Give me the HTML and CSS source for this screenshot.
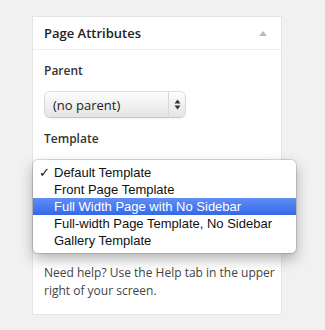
FILE: index.html
```html
<!DOCTYPE html>
<html lang="en">
  <head>
    <meta charset="UTF-8" />
    <title>Page Attributes</title>
    <link rel="stylesheet" href="styles.css">
  </head>
  <body>
    <div class="postbox">
      <header class="postbox-head">
        <h2>Page Attributes</h2>
        <span class="toggle"></span>
      </header>
      <div class="inside">
        <p class="label">Parent</p>
        <div class="select parent-select">
          <span class="select-value">(no parent)</span>
          <span class="select-arrows">
            <svg width="7" height="11" viewBox="0 0 7 11">
              <path d="M3.5 0.5 L6.5 4.5 L0.5 4.5 Z M3.5 10.5 L6.5 6.5 L0.5 6.5 Z" fill="#333"/>
            </svg>
          </span>
        </div>
        <p class="label">Template</p>
        <div class="template-wrap">
          <div class="select template-select"></div>
          <ul class="menu">
            <li class="checked">Default Template</li>
            <li>Front Page Template</li>
            <li class="active">Full Width Page with No Sidebar</li>
            <li>Full-width Page Template, No Sidebar</li>
            <li>Gallery Template</li>
          </ul>
        </div>
        <p class="help">Need help? Use the Help tab in the upper right of your screen.</p>
      </div>
    </div>
  </body>
</html>
```

FILE: styles.css
```css
* {
  box-sizing: border-box;
  margin: 0;
  padding: 0;
}
body {
  background: #f1f1f1;
  padding: 16px 0 0 32px;
  font-family: "Open Sans", sans-serif;
  color: #444;
}
.postbox {
  width: 250px;
  background: #fff;
  border: 1px solid #e5e5e5;
}
.postbox-head {
  display: flex;
  align-items: center;
  justify-content: space-between;
  height: 33px;
  padding: 0 12px 0 11px;
  border-bottom: 1px solid #eee;
}
.postbox-head h2 {
  font-size: 13px;
  font-weight: 600;
  color: #222;
}
.toggle {
  width: 0;
  height: 0;
  border-left: 4px solid transparent;
  border-right: 4px solid transparent;
  border-bottom: 5px solid #bbb;
  margin-right: 2px;
}
.inside {
  padding: 12px 3px 14px 11px;
}
.label {
  font-size: 12px;
  font-weight: 600;
  color: #333;
  line-height: 18px;
}
.select {
  display: flex;
  align-items: center;
  height: 25px;
  border-radius: 5px;
  background: linear-gradient(#fdfdfd, #e4e4e4);
  box-shadow: 0 0 0 1px rgba(0, 0, 0, 0.12), 0 1px 2px rgba(0, 0, 0, 0.15);
  font-size: 13px;
  color: #222;
}
.parent-select {
  width: 140px;
  margin: 12px 0 13px 1px;
}
.select-value {
  flex: 1;
  padding-left: 8px;
}
.select-arrows {
  display: flex;
  align-items: center;
  justify-content: center;
  width: 17px;
  height: 100%;
  border-left: 1px solid #d8d8d8;
}
.template-wrap {
  position: relative;
  margin-top: 12px;
}
.template-select {
  width: 228px;
  margin-left: 1px;
  opacity: 0.35;
}
.menu {
  position: absolute;
  top: 0;
  left: -11px;
  width: 263px;
  list-style: none;
  background: #fff;
  border-radius: 5px;
  padding: 4px 0 4px;
  box-shadow: 0 0 0 1px rgba(0, 0, 0, 0.12), 0 6px 14px rgba(0, 0, 0, 0.3);
  font-family: "Liberation Sans", sans-serif;
  font-size: 13px;
  color: #111;
}
.menu li {
  height: 17px;
  line-height: 17px;
  padding-left: 21px;
  position: relative;
}
.menu li.checked::before {
  content: "\2713";
  position: absolute;
  left: 6px;
  font-family: "DejaVu Sans", sans-serif;
  font-size: 13px;
}
.menu li.active {
  background: linear-gradient(#5f8ef4, #3568ea);
  color: #fff;
}
.help {
  margin-top: 79px;
  font-size: 12px;
  line-height: 18px;
  color: #444;
}
```
